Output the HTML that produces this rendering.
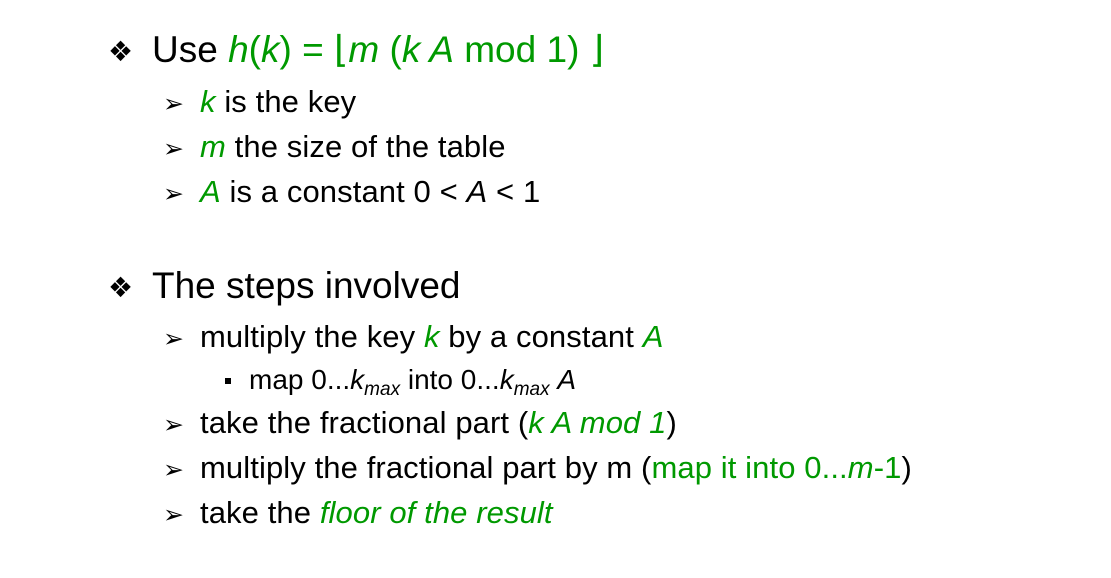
<!DOCTYPE html>
<html><head><meta charset="utf-8"><style>
body{margin:0;width:1111px;height:578px;background:#fff;position:relative;overflow:hidden;font-family:"Liberation Sans",Arial,sans-serif;color:#000}
.l{position:absolute;white-space:nowrap;line-height:1}
.g{color:#009900}
i{font-style:italic}
.b1{position:absolute;font-family:"DejaVu Sans",sans-serif;font-size:28px;line-height:1}
.b2{position:absolute;font-family:"DejaVu Sans",sans-serif;font-size:25px;line-height:1}
.sq{position:absolute;width:6px;height:6px;background:#000}
sub{font-size:19px;vertical-align:-6px;line-height:0}
.s2{font-size:31px;letter-spacing:0.1px}
</style></head><body>
<div class="b1" style="left:108px;top:38px">❖</div>
<div class="l" style="left:152px;top:31px;font-size:37px">Use <span class="g"><i>h</i>(<i>k</i>) = ⌊<i>m</i> (<i>k A</i> mod 1) ⌋</span></div>
<div class="b2" style="left:163px;top:91px">➢</div>
<div class="l s2" style="left:200px;top:86px"><i class="g">k</i> is the key</div>
<div class="b2" style="left:163px;top:136px">➢</div>
<div class="l s2" style="left:200px;top:131px"><i class="g">m</i> the size of the table</div>
<div class="b2" style="left:163px;top:181px">➢</div>
<div class="l s2" style="left:200px;top:176px"><i class="g">A</i> is a constant 0 &lt; <i>A</i> &lt; 1</div>

<div class="b1" style="left:108px;top:274px">❖</div>
<div class="l" style="left:152px;top:267px;font-size:37px">The steps involved</div>
<div class="b2" style="left:163px;top:326px">➢</div>
<div class="l s2" style="left:200px;top:321px">multiply the key <i class="g">k</i> by a constant <i class="g">A</i></div>
<div class="sq" style="left:225px;top:378px"></div>
<div class="l" style="left:249px;top:366px;font-size:28px">map 0...<i>k<sub>max</sub></i> into 0...<i>k<sub>max</sub></i> <i>A</i></div>
<div class="b2" style="left:163px;top:412px">➢</div>
<div class="l s2" style="left:200px;top:407px">take the fractional part (<i class="g">k A mod 1</i>)</div>
<div class="b2" style="left:163px;top:457px">➢</div>
<div class="l s2" style="left:200px;top:452px">multiply the fractional part by m (<span class="g">map it into 0...<i>m</i>-1</span>)</div>
<div class="b2" style="left:163px;top:502px">➢</div>
<div class="l s2" style="left:200px;top:497px">take the <i class="g">floor of the result</i></div>
</body></html>
